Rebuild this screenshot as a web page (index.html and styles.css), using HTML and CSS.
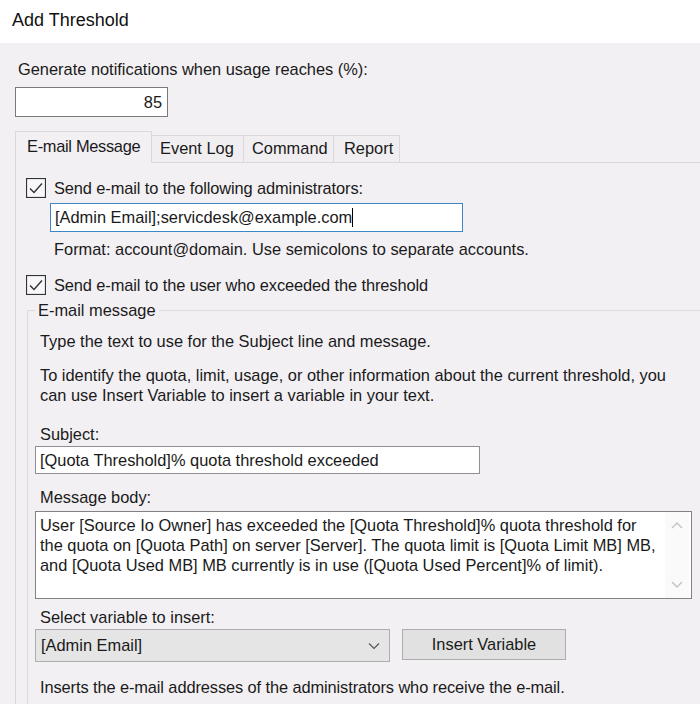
FILE: index.html
```html
<!DOCTYPE html>
<html lang="en">
<head>
<meta charset="utf-8">
<title>Add Threshold</title>
<link rel="stylesheet" href="styles.css">
</head>
<body>
<div class="dialog">
  <div class="titlebar">Add Threshold</div>
  <div class="content">
    <div class="top-label">Generate notifications when usage reaches (%):</div>
    <div class="num-input">85</div>

    <div class="tabs">
      <div class="tab selected">E-mail Message</div>
      <div class="tab">Event Log</div>
      <div class="tab">Command</div>
      <div class="tab">Report</div>
    </div>

    <div class="panel">
      <div class="check-row">
        <span class="checkbox"><svg width="20" height="20" viewBox="0 0 20 20"><rect x="0.5" y="0.5" width="19" height="19" fill="none" stroke="#333" stroke-width="1.2"/><path d="M4 10.5 L8 14.5 L16 5.5" fill="none" stroke="#333" stroke-width="1.4"/></svg></span>
        <span class="check-label">Send e-mail to the following administrators:</span>
      </div>
      <div class="email-input">[Admin Email];servicdesk@example.com<span class="caret"></span></div>
      <div class="hint">Format: account@domain. Use semicolons to separate accounts.</div>
      <div class="check-row second">
        <span class="checkbox"><svg width="20" height="20" viewBox="0 0 20 20"><rect x="0.5" y="0.5" width="19" height="19" fill="none" stroke="#333" stroke-width="1.2"/><path d="M4 10.5 L8 14.5 L16 5.5" fill="none" stroke="#333" stroke-width="1.4"/></svg></span>
        <span class="check-label">Send e-mail to the user who exceeded the threshold</span>
      </div>

      <fieldset class="group">
        <legend>E-mail message</legend>
        <div class="text first">Type the text to use for the Subject line and message.</div>
        <div class="text para">To identify the quota, limit, usage, or other information about the current threshold, you<br>can use Insert Variable to insert a variable in your text.</div>
        <div class="text field-label subject-label">Subject:</div>
        <div class="subject-input">[Quota Threshold]% quota threshold exceeded</div>
        <div class="text field-label body-label">Message body:</div>
        <div class="textarea">
          <div class="textarea-text">User [Source Io Owner] has exceeded the [Quota Threshold]% quota threshold for<br>the quota on [Quota Path] on server [Server]. The quota limit is [Quota Limit MB] MB,<br>and [Quota Used MB] MB currently is in use ([Quota Used Percent]% of limit).</div>
          <div class="scrollbar">
            <svg width="14" height="10" viewBox="0 0 14 10"><path d="M2 8 L7 3 L12 8" fill="none" stroke="#c2c2c2" stroke-width="1.4"/></svg>
            <svg width="14" height="10" viewBox="0 0 14 10"><path d="M2 2 L7 7 L12 2" fill="none" stroke="#c2c2c2" stroke-width="1.4"/></svg>
          </div>
        </div>
        <div class="text field-label select-label">Select variable to insert:</div>
        <div class="select-row">
          <div class="select">
            <span>[Admin Email]</span>
            <svg width="14" height="10" viewBox="0 0 14 10"><path d="M2 2.5 L7 7.5 L12 2.5" fill="none" stroke="#555" stroke-width="1.2"/></svg>
          </div>
          <div class="button">Insert Variable</div>
        </div>
        <div class="text last">Inserts the e-mail addresses of the administrators who receive the e-mail.</div>
      </fieldset>
    </div>
  </div>
</div>
</body>
</html>
```

FILE: styles.css
```css
html, body {
  margin: 0;
  padding: 0;
}
body {
  width: 700px;
  height: 704px;
  overflow: hidden;
  background: #f3f0f4;
  font-family: "Liberation Sans", Arial, sans-serif;
  font-size: 16px;
  color: #1a1a1a;
}
.dialog {
  width: 700px;
  height: 704px;
  overflow: hidden;
}
.titlebar {
  height: 43px;
  line-height: 41px;
  background: #ffffff;
  padding-left: 12px;
  font-size: 18px;
  color: #111;
}
.content {
  padding: 16px 0 0 15px;
}
.top-label {
  margin-left: 3px;
  line-height: 20px;
  font-size: 16.4px;
}
.num-input {
  margin-top: 8px;
  box-sizing: border-box;
  width: 153px;
  height: 30px;
  border: 1px solid #7a7a7a;
  background: #fff;
  text-align: right;
  padding-right: 5px;
  line-height: 28px;
  font-size: 16.4px;
}
.tabs {
  margin-top: 14px;
  display: flex;
  align-items: flex-end;
  height: 31px;
}
.tab {
  box-sizing: border-box;
  height: 27px;
  line-height: 25px;
  border: 1px solid #d9d9d9;
  border-bottom: none;
  border-left: none;
  background: #f0eef1;
  padding: 0 10px;
  font-size: 16.4px;
}
.tab:nth-child(2) { width: 92px; padding: 0 0 0 8px; }
.tab:nth-child(3) { width: 90px; padding: 0 0 0 8px; }
.tab:nth-child(4) { width: 66px; padding: 0 0 0 10px; }
.tab.selected {
  position: relative;
  z-index: 1;
  width: 137px;
  height: 32px;
  margin-bottom: -1px;
  line-height: 28px;
  border-left: 1px solid #d9d9d9;
  background: #f3f0f4;
  padding: 0 0 0 11px;
  letter-spacing: -0.3px;
}
.panel {
  border-top: 1px solid #d9d9d9;
  border-left: 1px solid #d9d9d9;
  padding: 14px 0 0 10px;
  height: 560px;
}
.check-row {
  display: flex;
  align-items: center;
  height: 22px;
  font-size: 16.4px;
}
.check-row.second {
  margin-top: 15px;
}
.checkbox {
  display: flex;
  width: 20px;
  height: 20px;
  background: #f7f6f8;
}
.check-label {
  margin-left: 8px;
  letter-spacing: -0.1px;
}
.email-input {
  margin-top: 4px;
  margin-left: 24px;
  box-sizing: border-box;
  width: 413px;
  height: 29px;
  border: 1px solid #3b87c7;
  background: #fff;
  padding-left: 4px;
  line-height: 27px;
  font-size: 16.4px;
}
.caret {
  display: inline-block;
  width: 1px;
  height: 19px;
  background: #000;
  vertical-align: -4px;
}
.hint {
  margin-top: 7px;
  margin-left: 28px;
  line-height: 20px;
  font-size: 16.4px;
}
.group {
  margin: 4px 0 0 1px;
  padding: 0 0 0 7px;
  width: 700px;
  height: 420px;
  border: 1px solid #dcdcdc;
  border-right: none;
  border-bottom: none;
  min-width: 0;
}
.group legend {
  padding: 0 3px;
  margin-left: 0;
  line-height: 20px;
  font-size: 16.4px;
}
.text {
  margin-left: 5px;
  line-height: 20px;
  font-size: 16.4px;
}
.text.first { margin-top: 11px; }
.text.para { margin-top: 14px; }
.subject-label { margin-top: 19px; }
.subject-input {
  margin-top: 2px;
  box-sizing: border-box;
  width: 445px;
  height: 28px;
  border: 1px solid #8f8f8f;
  background: #fff;
  padding-left: 4px;
  line-height: 26px;
  font-size: 16.4px;
}
.body-label { margin-top: 13px; }
.textarea {
  margin-top: 4px;
  box-sizing: border-box;
  width: 657px;
  height: 88px;
  border: 1px solid #828282;
  background: #fff;
  display: flex;
}
.textarea-text {
  flex: 1;
  padding: 3px 0 0 4px;
  line-height: 20px;
  font-size: 16.4px;
}
.scrollbar {
  width: 24px;
  margin-right: 2px;
  background: #fafafa;
  display: flex;
  flex-direction: column;
  justify-content: space-between;
  align-items: center;
  padding: 8px 0 8px;
}
.select-label { margin-top: 8px; }
.select-row {
  margin-top: 2px;
  display: flex;
  align-items: flex-start;
  gap: 12px;
}
.select {
  box-sizing: border-box;
  width: 355px;
  height: 33px;
  border: 1px solid #adadad;
  background: #e5e5e5;
  display: flex;
  align-items: center;
  justify-content: space-between;
  padding: 0 8px 0 5px;
  font-size: 16.4px;
}
.button {
  box-sizing: border-box;
  width: 164px;
  height: 31px;
  border: 1px solid #adadad;
  background: #e1e1e1;
  text-align: center;
  line-height: 29px;
  font-size: 16.4px;
}
.text.last { margin-top: 15px; letter-spacing: -0.1px; }
```
